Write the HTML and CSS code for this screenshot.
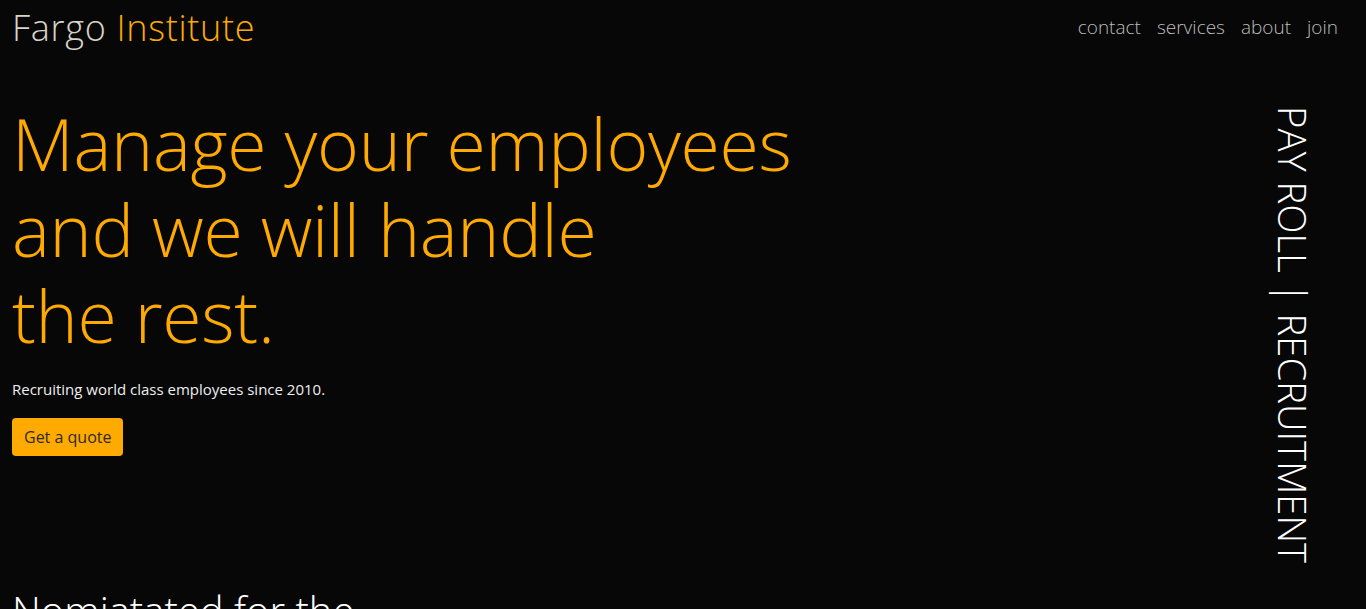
FILE: index.html
```html
<!DOCTYPE html>
<html>
	<head>
		<meta charset="utf-8">
		<meta name="viewport" content="width=device-width, initial-scale=1">
		<link rel="stylesheet" href="styles.css">
	</head>
	<body>
		<header class="topbar">
			<a href="#" class="brand">Fargo <span class="brand-accent">Institute</span></a>
			<nav class="menu">
				<a href="#">contact</a>
				<a href="#">services</a>
				<a href="#">about</a>
				<a href="#">join</a>
			</nav>
		</header>

		<section class="hero">
			<div class="hero-text">
				<h1 class="headline">Manage your employees<br>and we will handle<br>the rest.</h1>
				<p class="lead">Recruiting world class employees since 2010.</p>
				<a href="#" class="quote-btn">Get a quote</a>
			</div>
			<div class="side-label">PAY ROLL | RECRUITMENT</div>
		</section>

		<section class="awards">
			<h2>Nomiatated for the</h2>
		</section>
	</body>
</html>
```

FILE: styles.css
```css
body {
	margin: 0;
	background: #070707;
	color: #eee;
	font-family: "Open Sans", "DejaVu Sans", sans-serif;
	font-weight: 300;
	overflow: hidden;
}
a {
	text-decoration: none;
}

.topbar {
	display: flex;
	justify-content: space-between;
	align-items: center;
	padding: 2px 20px 0 12px;
	height: 50px;
}
.brand {
	font-size: 36px;
	color: #d9d4c8;
	font-weight: 300;
	letter-spacing: 0.7px;
}
.brand-accent {
	color: #ffaa00;
}
.menu {
	display: flex;
}
.menu a {
	color: #bdbdbd;
	font-size: 19px;
	padding: 0 8px;
}

.hero {
	display: flex;
	justify-content: space-between;
	padding: 49px 54px 0 12px;
	height: 531px;
	box-sizing: border-box;
}
.headline {
	margin: 0;
	font-size: 71.5px;
	font-weight: 300;
	line-height: 86px;
	color: #ffaa00;
	letter-spacing: -0.3px;
}
.lead {
	margin: 20px 0 19px 0;
	font-size: 15px;
	font-weight: 400;
	color: #eee;
}
.quote-btn {
	display: inline-block;
	background: #ffaa00;
	color: #2a2a2a;
	font-size: 16px;
	line-height: 22px;
	font-weight: 400;
	padding: 8px 12px;
	border-radius: 4px;
}

.side-label {
	writing-mode: vertical-rl;
	white-space: nowrap;
	font-size: 38.3px;
	color: #fff;
	line-height: 1;
	padding-top: 5px;
}

.awards {
	padding: 0 12px;
}
.awards h2 {
	margin: 0;
	font-size: 40px;
	font-weight: 300;
	color: #fff;
}
```
